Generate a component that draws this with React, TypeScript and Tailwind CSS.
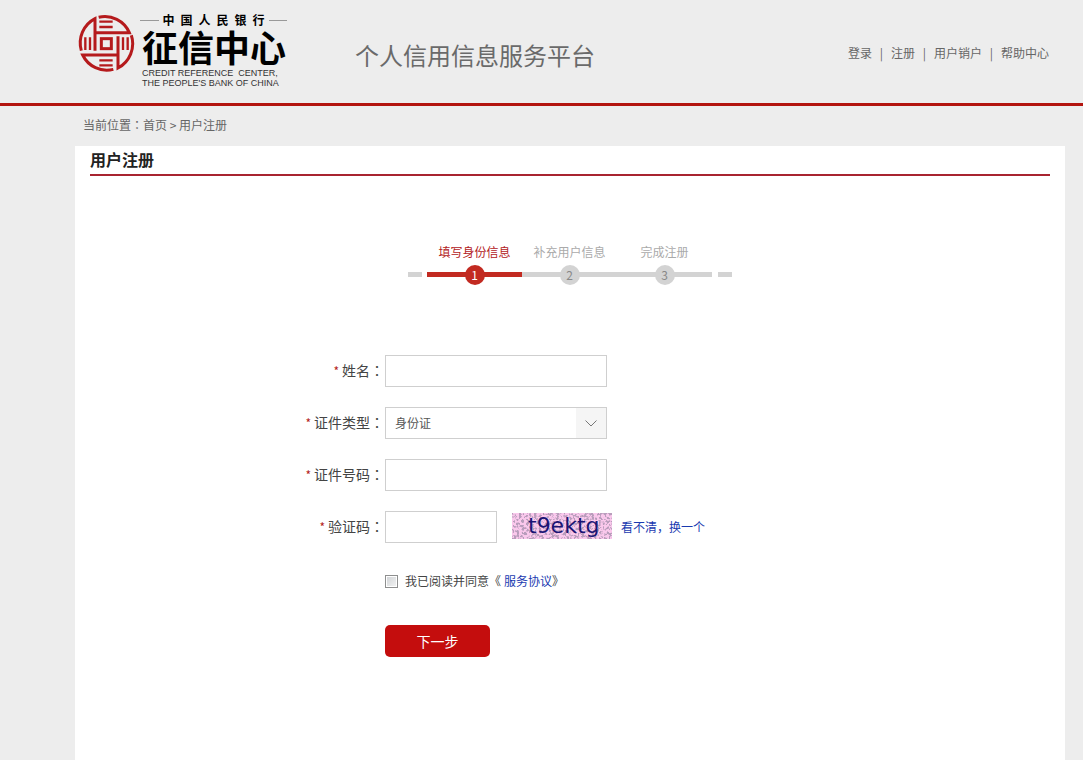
import { useState } from "react";
import type { FormEvent, ReactNode } from "react";

const navLinks = ["登录", "注册", "用户销户", "帮助中心"];

const steps = ["填写身份信息", "补充用户信息", "完成注册"];

const inputClass = "h-8 border border-[#cfcfcf] bg-white px-2 text-xs text-[#555] outline-none";

// full-width colon centred in its box
function Colon() {
  return <span className="font-['Noto_Sans_CJK_TC',sans-serif]">：</span>;
}

function Emblem() {
  return (
    <svg viewBox="0 0 180 186" className="h-[62px] w-[60px]" fill="none" stroke="#b51a1c" strokeWidth="9" aria-hidden="true">
      {/* four interlocking segments */}
      <path d="M68 16 A80 80 0 0 1 160 62 H54" />
      <path d="M57 116 V20 A82 82 0 0 0 16 116" />
      <path d="M126 129 H20 A80 80 0 0 0 112 172" />
      <path d="M126 73 V168 A82 82 0 0 0 166 70" />
      {/* inner bars */}
      <path d="M70 29 H110 M70 45 H110 M70 145 H110 M70 160 H110" strokeWidth="7" />
      <path d="M28 76 V114 M42 76 V114 M141 76 V114 M155 76 V114" strokeWidth="7" />
      <rect x="76" y="80" width="30" height="30" />
    </svg>
  );
}

function Logo() {
  return (
    <a href="#" className="flex items-start gap-1">
      <Emblem />
      <span className="flex w-[147px] flex-col text-black">
        <span className="flex items-center gap-1">
          <span className="h-px flex-1 bg-[#999]" />
          <span className="text-xs leading-4 font-bold whitespace-pre">
            {"中\u2002国\u2002人\u2002民\u2002银\u2002行"}
          </span>
          <span className="h-px flex-1 bg-[#999]" />
        </span>
        <span className="pl-0.5 text-4xl leading-9 font-bold whitespace-nowrap">征信中心</span>
        <span className="pt-1 pl-0.5 font-['Liberation_Sans',sans-serif] text-[9px] leading-[10px] whitespace-pre text-[#333]">
          {"CREDIT REFERENCE  CENTER,\nTHE PEOPLE'S BANK OF CHINA"}
        </span>
      </span>
    </a>
  );
}

function Steps() {
  const current = 0;
  return (
    <ol className="flex justify-center">
      <li aria-hidden="true" className="mt-[30px] mr-[5px] h-[5px] w-3.5 bg-[#d3d3d3]" />
      {steps.map((step, i) => (
        <li key={step} className="flex w-[95px] flex-col items-center">
          <span className={`h-[23px] text-xs leading-5 ${i === current ? "text-[#b3211c]" : "text-[#aaa]"}`}>
            {step}
          </span>
          <span
            className={`flex h-5 w-full items-center justify-center bg-linear-to-r bg-[length:100%_5px] bg-[position:0_7px] bg-no-repeat ${
              i === current ? "from-[#c22a21] to-[#c22a21]" : "from-[#d3d3d3] to-[#d3d3d3]"
            }`}
          >
            <span
              className={`flex size-5 items-center justify-center rounded-full text-xs leading-5 ${
                i === current ? "bg-[#c22a21] text-white" : "bg-[#d3d3d3] text-[#888]"
              }`}
            >
              {i + 1}
            </span>
          </span>
        </li>
      ))}
      <li aria-hidden="true" className="mt-[30px] ml-1.5 h-[5px] w-3.5 bg-[#d3d3d3]" />
    </ol>
  );
}

function Captcha() {
  return (
    <svg viewBox="0 0 100 26" className="h-[26px] w-[100px]" role="img" aria-label="验证码图片">
      <filter id="noise" x="0" y="0" width="100%" height="100%" colorInterpolationFilters="sRGB">
        <feTurbulence type="fractalNoise" baseFrequency="0.4" numOctaves="2" seed="4" />
        <feColorMatrix values="0 0 0 0 0.62  0 0 0 0 0.55  0 0 0 0 0.66  8 0 0 0 -3.8" />
      </filter>
      <rect width="100" height="26" fill="#fac8ec" />
      <rect width="100" height="26" filter="url(#noise)" opacity="0.7" />
      <text x="16" y="20" fontSize="22" fill="#1b1474" fontFamily="'DejaVu Sans', sans-serif">
        t9ektg
      </text>
    </svg>
  );
}

function Field({ id, label, children }: { id: string; label: string; children: ReactNode }) {
  return (
    <div className="grid grid-cols-[294px_1fr] items-center gap-px">
      <label htmlFor={id} className="pb-0.5 text-right text-sm text-[#444]">
        <span className="mr-[3px] text-xs text-[#b3211c]">*</span>
        {label}
        <Colon />
      </label>
      <div className="flex items-center">{children}</div>
    </div>
  );
}

export default function App() {
  const [agreed, setAgreed] = useState(false);

  const handleSubmit = (e: FormEvent) => {
    e.preventDefault();
  };

  return (
    <div className="flex min-h-screen flex-col bg-[#ededed] font-['Noto_Sans_CJK_SC',sans-serif] text-xs text-[#666]">
      <header className="flex h-[106px] items-start border-b-3 border-[#b3150f] pr-[34px] pl-[76px]">
        <div className="pt-3">
          <Logo />
        </div>
        <h1 className="ml-[68px] pt-[37px] text-2xl leading-9 whitespace-nowrap text-[#6a6a6a]">个人信用信息服务平台</h1>
        <nav className="ml-auto flex pt-[43px] leading-5 whitespace-nowrap">
          {navLinks.map((link, i) => (
            <span key={link} className="flex">
              {i > 0 && <span className="w-[19px] text-center">|</span>}
              <a href="#">{link}</a>
            </span>
          ))}
        </nav>
      </header>

      <nav aria-label="当前位置" className="pt-[9px] pb-[11px] pl-[83px] leading-5">
        当前位置<Colon />
        <a href="#">首页</a> &gt; <a href="#">用户注册</a>
      </nav>

      <main className="mr-[18px] ml-[75px] flex-1 bg-white px-[15px]">
        <h2 className="border-b-2 border-[#a82430] pb-0.5 text-base leading-[26px] font-bold text-[#222]">用户注册</h2>

        <div className="pt-[66px]">
          <Steps />
        </div>

        <form onSubmit={handleSubmit} className="flex flex-col gap-5 pt-[70px] pb-12">
          <Field id="name" label="姓名">
            <input id="name" type="text" className={`${inputClass} w-[222px]`} />
          </Field>

          <Field id="idType" label="证件类型">
            <span className="grid w-[222px]">
              <select
                id="idType"
                className="col-start-1 row-start-1 h-8 appearance-none border border-[#cfcfcf] bg-white px-[9px] text-xs text-[#555] outline-none"
              >
                <option>身份证</option>
              </select>
              <span className="pointer-events-none col-start-1 row-start-1 m-px flex w-[30px] items-center justify-center justify-self-end bg-[#f5f5f5]">
                <svg viewBox="0 0 12 7" className="h-[7px] w-3" fill="none" stroke="#777" aria-hidden="true">
                  <path d="M0.5 0.5 L6 6 L11.5 0.5" />
                </svg>
              </span>
            </span>
          </Field>

          <Field id="idNumber" label="证件号码">
            <input id="idNumber" type="text" className={`${inputClass} w-[222px]`} />
          </Field>

          <Field id="captcha" label="验证码">
            <input id="captcha" type="text" className={`${inputClass} mr-[15px] w-28`} />
            <span className="pb-0.5">
              <Captcha />
            </span>
            <a href="#" className="ml-[9px] text-[#1a3ab0]">
              看不清，换一个
            </a>
          </Field>

          <div className="ml-[295px] flex items-center pt-2 leading-5">
            <input
              id="agree"
              type="checkbox"
              checked={agreed}
              onChange={(e) => setAgreed(e.target.checked)}
              className="mr-[7px] size-[13px] appearance-none border border-[#8e8f8f] bg-linear-to-br from-[#cfd2d5] to-[#f4f4f4] ring-1 ring-white ring-inset checked:from-[#555] checked:to-[#777]"
            />
            <label htmlFor="agree" className="text-[#444]">
              我已阅读并同意《
            </label>
            <a href="#" className="ml-[3px] text-[#1a3ab0]">
              服务协议
            </a>
            <span className="text-[#444]">》</span>
          </div>

          <button
            type="submit"
            className="mt-3.5 ml-[295px] h-8 w-[105px] rounded-[5px] bg-[#c40d0d] text-sm text-white"
          >
            下一步
          </button>
        </form>
      </main>
    </div>
  );
}
